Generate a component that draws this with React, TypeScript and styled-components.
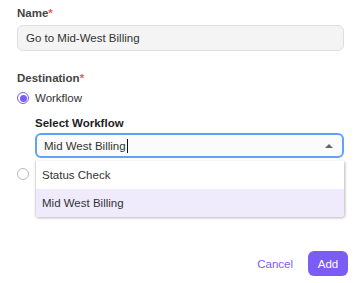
import React, { useState } from "react";
import styled, { createGlobalStyle } from "styled-components";

const GlobalStyle = createGlobalStyle`
  body {
    margin: 0;
    background: #ffffff;
    font-family: "Liberation Sans", Arial, sans-serif;
    font-size: 11.5px;
    color: #333333;
  }
`;

const Form = styled.div`
  display: flex;
  flex-direction: column;
  padding: 6px 10px 0 17px;
`;

const Fields = styled.div`
  display: flex;
  flex-direction: column;
  padding-right: 4px;
`;

const Label = styled.div<{ $top?: number }>`
  font-weight: bold;
  line-height: 14px;
  color: #454545;
  margin-top: ${(p) => p.$top ?? 0}px;
  margin-bottom: 5px;

  span {
    color: #e55b5b;
  }
`;

const TextInput = styled.div`
  height: 24px;
  display: flex;
  align-items: center;
  padding: 0 8px;
  border: 1px solid #dedede;
  border-radius: 6px;
  background: #f4f4f4;
  color: #333;
`;

const RadioRow = styled.label<{ $top: number }>`
  display: flex;
  align-items: center;
  gap: 6px;
  height: 14px;
  margin-top: ${(p) => p.$top}px;
  line-height: 14px;
`;

const RadioDot = styled.span<{ $checked?: boolean }>`
  width: 12px;
  height: 12px;
  box-sizing: border-box;
  border-radius: 50%;
  border: ${(p) => (p.$checked ? "1.5px solid #7b5cf6" : "1px solid #b8b8b8")};
  background: #fff;
  display: flex;
  align-items: center;
  justify-content: center;

  &::after {
    content: "";
    display: ${(p) => (p.$checked ? "block" : "none")};
    width: 7px;
    height: 7px;
    border-radius: 50%;
    background: #7b5cf6;
  }
`;

const Nested = styled.div`
  position: relative;
  display: flex;
  flex-direction: column;
  margin-left: 18px;
`;

const SubLabel = styled.div`
  font-weight: bold;
  color: #222;
  line-height: 14px;
  margin-top: 11px;
  margin-bottom: 3px;
`;

const Select = styled.div`
  height: 21px;
  display: flex;
  align-items: center;
  padding: 0 7px;
  border: 2px solid #62a2f6;
  border-radius: 6px;
  background: #fbfbfb;
  color: #333;
`;

const Caret = styled.span`
  width: 1px;
  height: 14px;
  margin-left: 1px;
  background: #111;
`;

const Arrow = styled.span`
  margin-left: auto;
  margin-right: 2px;
  width: 0;
  height: 0;
  border-left: 4px solid transparent;
  border-right: 4px solid transparent;
  border-bottom: 4px solid #666;
`;

const Menu = styled.div`
  position: absolute;
  left: 0;
  right: 0;
  top: 56px;
  z-index: 2;
  background: #fff;
  border-left: 1px solid #dcdcdc;
  box-shadow: 1px 1px 3px rgba(0, 0, 0, 0.28);
  border-radius: 0 0 3px 3px;
  overflow: hidden;
`;

const MenuItem = styled.div<{ $active?: boolean }>`
  height: 28px;
  display: flex;
  align-items: center;
  padding-left: 6px;
  background: ${(p) => (p.$active ? "#efebfd" : "#fff")};
  color: #333;
`;

const Footer = styled.div`
  display: flex;
  justify-content: flex-end;
  align-items: center;
  gap: 15px;
  margin-top: 70px;
`;

const TextButton = styled.button`
  border: none;
  background: none;
  padding: 0;
  font: inherit;
  color: #7b5cf6;
  cursor: pointer;
`;

const PrimaryButton = styled.button`
  border: none;
  height: 25px;
  width: 40px;
  border-radius: 6px;
  background: #7b5cf6;
  color: #fff;
  font: inherit;
  cursor: pointer;
`;

const workflows = ["Status Check", "Mid West Billing"];

export default function App() {
  const [selected] = useState("Mid West Billing");

  return (
    <>
      <GlobalStyle />
      <Form>
        <Fields>
          <Label>
            Name<span>*</span>
          </Label>
          <TextInput>Go to Mid-West Billing</TextInput>

          <Label $top={20}>
            Destination<span>*</span>
          </Label>
          <RadioRow $top={1}>
            <RadioDot $checked />
            Workflow
          </RadioRow>
          <Nested>
            <SubLabel>Select Workflow</SubLabel>
            <Select>
              {selected}
              <Caret />
              <Arrow />
            </Select>
            <Menu>
              {workflows.map((w) => (
                <MenuItem key={w} $active={w === selected}>
                  {w}
                </MenuItem>
              ))}
            </Menu>
          </Nested>
          <RadioRow $top={9}>
            <RadioDot />
          </RadioRow>
        </Fields>
        <Footer>
          <TextButton>Cancel</TextButton>
          <PrimaryButton>Add</PrimaryButton>
        </Footer>
      </Form>
    </>
  );
}
